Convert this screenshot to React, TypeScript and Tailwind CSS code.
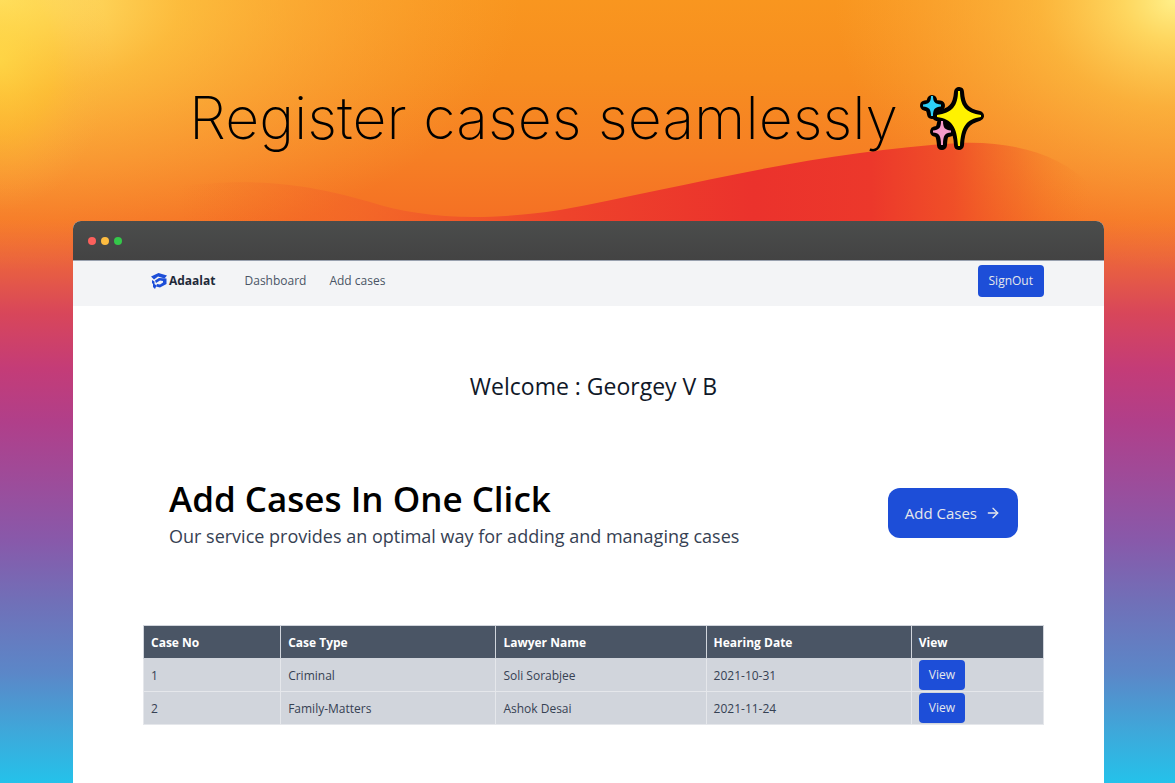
import { ArrowRight } from 'lucide-react';

interface CourtCase {
  no: number;
  type: string;
  lawyer: string;
  hearing: string;
}

const cases: CourtCase[] = [
  { no: 1, type: 'Criminal', lawyer: 'Soli Sorabjee', hearing: '2021-10-31' },
  { no: 2, type: 'Family-Matters', lawyer: 'Ashok Desai', hearing: '2021-11-24' },
];

// widths act as proportions, the fixed table layout stretches them
const columns = [
  { label: 'Case No', width: 'w-[137px]' },
  { label: 'Case Type', width: 'w-[215px]' },
  { label: 'Lawyer Name', width: 'w-[210px]' },
  { label: 'Hearing Date', width: 'w-[205px]' },
  { label: 'View', width: 'w-[132px]' },
];

function Backdrop() {
  return (
    <svg
      aria-hidden
      className="absolute inset-0 -z-10 h-full w-full"
      viewBox="0 0 1175 783"
      preserveAspectRatio="none"
    >
      <defs>
        <linearGradient id="sky" x1="0" y1="0" x2="0" y2="1">
          <stop offset="0" stopColor="#f9961f" />
          <stop offset="0.1" stopColor="#f78d20" />
          <stop offset="0.2" stopColor="#f67f24" />
          <stop offset="0.28" stopColor="#f57024" />
          <stop offset="0.34" stopColor="#e96040" />
          <stop offset="0.4" stopColor="#d8465a" />
          <stop offset="0.47" stopColor="#c43c77" />
          <stop offset="0.54" stopColor="#b03f8a" />
          <stop offset="0.61" stopColor="#9e4b99" />
          <stop offset="0.69" stopColor="#8859aa" />
          <stop offset="0.77" stopColor="#7070b8" />
          <stop offset="0.86" stopColor="#5b87c8" />
          <stop offset="0.93" stopColor="#40a6d9" />
          <stop offset="1" stopColor="#24c2ea" />
        </linearGradient>
        <radialGradient id="sunLeft" gradientUnits="userSpaceOnUse" cx="0" cy="0" r="1" gradientTransform="scale(520 270)">
          <stop offset="0" stopColor="#fff080" />
          <stop offset="0.12" stopColor="#ffe56c" stopOpacity="0.9" />
          <stop offset="0.35" stopColor="#fed04c" stopOpacity="0.65" />
          <stop offset="0.65" stopColor="#fdba45" stopOpacity="0.4" />
          <stop offset="1" stopColor="#fbb040" stopOpacity="0" />
        </radialGradient>
        <radialGradient id="glowLeft" gradientUnits="userSpaceOnUse" cx="0" cy="0" r="1" gradientTransform="translate(0 60) scale(110 150)">
          <stop offset="0" stopColor="#ffd840" stopOpacity="0.7" />
          <stop offset="0.5" stopColor="#fec52c" stopOpacity="0.4" />
          <stop offset="1" stopColor="#fbb040" stopOpacity="0" />
        </radialGradient>
        <radialGradient id="sunRight" gradientUnits="userSpaceOnUse" cx="0" cy="0" r="1" gradientTransform="translate(1175 0) scale(340 270)">
          <stop offset="0" stopColor="#fff08a" />
          <stop offset="0.15" stopColor="#ffe26a" stopOpacity="0.85" />
          <stop offset="0.4" stopColor="#fdc94c" stopOpacity="0.6" />
          <stop offset="0.7" stopColor="#fcb845" stopOpacity="0.35" />
          <stop offset="1" stopColor="#fbb040" stopOpacity="0" />
        </radialGradient>
        <linearGradient id="wave" x1="180" y1="0" x2="1090" y2="0" gradientUnits="userSpaceOnUse">
          <stop offset="0" stopColor="#f36b26" stopOpacity="0" />
          <stop offset="0.2" stopColor="#f2602a" stopOpacity="0.6" />
          <stop offset="0.42" stopColor="#ee432b" />
          <stop offset="0.63" stopColor="#eb322c" />
          <stop offset="0.76" stopColor="#ec382b" />
          <stop offset="0.85" stopColor="#ef4b28" stopOpacity="0.9" />
          <stop offset="0.92" stopColor="#f15e26" stopOpacity="0.5" />
          <stop offset="1" stopColor="#f57c22" stopOpacity="0" />
        </linearGradient>
      </defs>
      <rect width="1175" height="783" fill="url(#sky)" />
      <rect width="1175" height="300" fill="url(#sunLeft)" />
      <rect width="1175" height="300" fill="url(#glowLeft)" />
      <rect width="1175" height="300" fill="url(#sunRight)" />
      <path
        d="M180 186C270 176 320 188 370 202C420 218 480 222 560 210C680 188 810 152 960 143C1010 141 1060 153 1090 185V245H180Z"
        fill="url(#wave)"
      />
    </svg>
  );
}

function Sparkles() {
  return (
    <svg aria-hidden className="h-16 w-[68px] shrink-0" viewBox="0 0 68 64">
      <g stroke="#000" strokeWidth="10" strokeLinejoin="round">
        <path d="M14 13C14.500 17 16 18 22 18.500C16 19.500 14.500 21 14 27C13 21 11.500 19.500 7 18.500C11.500 18 13 17 14 13Z" />
        <path d="M24 36C24.500 42 26 43.500 32 44.500C26 45.500 24.500 47 24 58C23 47 21.500 45.500 17 44.500C21.500 43.500 23 42 24 36Z" />
        <path d="M41 5C42 20 47 26 61 29C47 33 42 40 41 58C40 40 34 33 19 29C34 26 40 20 41 5Z" />
      </g>
      <path d="M13 9H15C15 15 17 17 23 17.500V19.500C17 20 15 22 15 29H13C13 22 11 20 5 19.500V17.500C11 17 13 15 13 9Z" fill="#2dd0f7" />
      <path d="M23 34H25C25 41 27 43 33 43.500V45.500C27 46 25 48 25 58H23C23 48 21 46 15 45.500V43.500C21 43 23 41 23 34Z" fill="#f59bc8" />
      <path d="M40 4H42C42 19 48 26 63 28V30C48 32 43 40 42 59H40C39 40 34 32 19 30V28C34 26 40 19 40 4Z" fill="#fff200" />
    </svg>
  );
}

function Logo() {
  return (
    <svg aria-hidden className="size-4" viewBox="0 0 16 16" fill="#1d4ed8">
      <path d="M0 3.500L7.500 0L16 2.500L13.500 5.500L7 3.500L3 6.500Z" />
      <path d="M4 7.500L8 5L15.500 5.500V11L9 14.500L5 13.500L6 11L9 11.500L12 9.500V8L9 7.500L5 10Z" />
      <path d="M1 7L3.500 8.500V11L5.500 12.500L4 16L2 14V11L1 10Z" />
    </svg>
  );
}

function Navbar() {
  return (
    <nav className="flex h-[45px] items-center bg-gray-100 pr-[60px] pb-1.5 pl-[78px] text-xs text-gray-600">
      <a href="#" className="flex items-center gap-0.5 font-bold text-gray-800">
        <Logo />
        Adaalat
      </a>
      <a href="#dashboard" className="ml-[29px]">Dashboard</a>
      <a href="#add" className="ml-[23px]">Add cases</a>
      <button className="ml-auto h-8 rounded-sm bg-[#1d4ed8] px-[11px] text-gray-200">SignOut</button>
    </nav>
  );
}

function CaseTable() {
  return (
    <table className="w-full table-fixed border-collapse text-left text-xs text-gray-700">
      <thead>
        <tr className="h-[33px] bg-gray-600 text-white">
          {columns.map((col) => (
            <th key={col.label} className={`${col.width} border border-gray-300 px-[7px] pt-0.5 font-bold`}>
              {col.label}
            </th>
          ))}
        </tr>
      </thead>
      <tbody>
        {cases.map((c) => (
          <tr key={c.no} className="h-[33px] bg-gray-300">
            <td className="border border-gray-200 px-[7px] pt-0.5">{c.no}</td>
            <td className="border border-gray-200 px-[7px] pt-0.5">{c.type}</td>
            <td className="border border-gray-200 px-[7px] pt-0.5">{c.lawyer}</td>
            <td className="border border-gray-200 px-[7px] pt-0.5">{c.hearing}</td>
            <td className="border border-gray-200 px-[7px]">
              <button className="block h-[30px] rounded-sm bg-[#1d4ed8] px-2.5 text-xs text-gray-200">View</button>
            </td>
          </tr>
        ))}
      </tbody>
    </table>
  );
}

export default function App() {
  return (
    <div className="relative isolate flex min-h-screen flex-col overflow-hidden font-['Open_Sans',sans-serif]">
      <Backdrop />
      <h1 className="flex h-[221px] items-center justify-center gap-5 pt-4 font-['Inter',sans-serif] text-[59px] font-extralight text-black">
        Register cases seamlessly
        <Sparkles />
      </h1>

      <div className="mr-[71px] ml-[73px] flex grow flex-col overflow-hidden rounded-t-lg bg-white">
        {/* Window title bar */}
        <div className="flex h-10 items-center gap-[5px] border-b border-gray-400 bg-linear-to-b from-[#4b4d4c] to-[#434343] pl-[15px]">
          <span className="size-2 rounded-full bg-[#fc605c]" />
          <span className="size-2 rounded-full bg-[#fdbc40]" />
          <span className="size-2 rounded-full bg-[#34c84a]" />
        </div>
        <Navbar />

        <main className="pr-[60px] pl-[70px]">
          <h2 className="mt-16 text-center text-[23px] leading-8 text-gray-900">Welcome : Georgey V B</h2>

          <section className="mt-[74px] flex items-center justify-between px-[26px]">
            <div>
              <h3 className="text-[35px] leading-[46px] font-semibold text-black">Add Cases In One Click</h3>
              <p className="text-lg leading-7 text-gray-700">
                Our service provides an optimal way for adding and managing cases
              </p>
            </div>
            <button className="flex h-[50px] items-center gap-2 rounded-xl bg-[#1d4ed8] px-[17px] text-[15px] text-gray-200">
              Add Cases
              <ArrowRight className="size-4" />
            </button>
          </section>

          <div className="mt-[75px]">
            <CaseTable />
          </div>
        </main>
      </div>
    </div>
  );
}
